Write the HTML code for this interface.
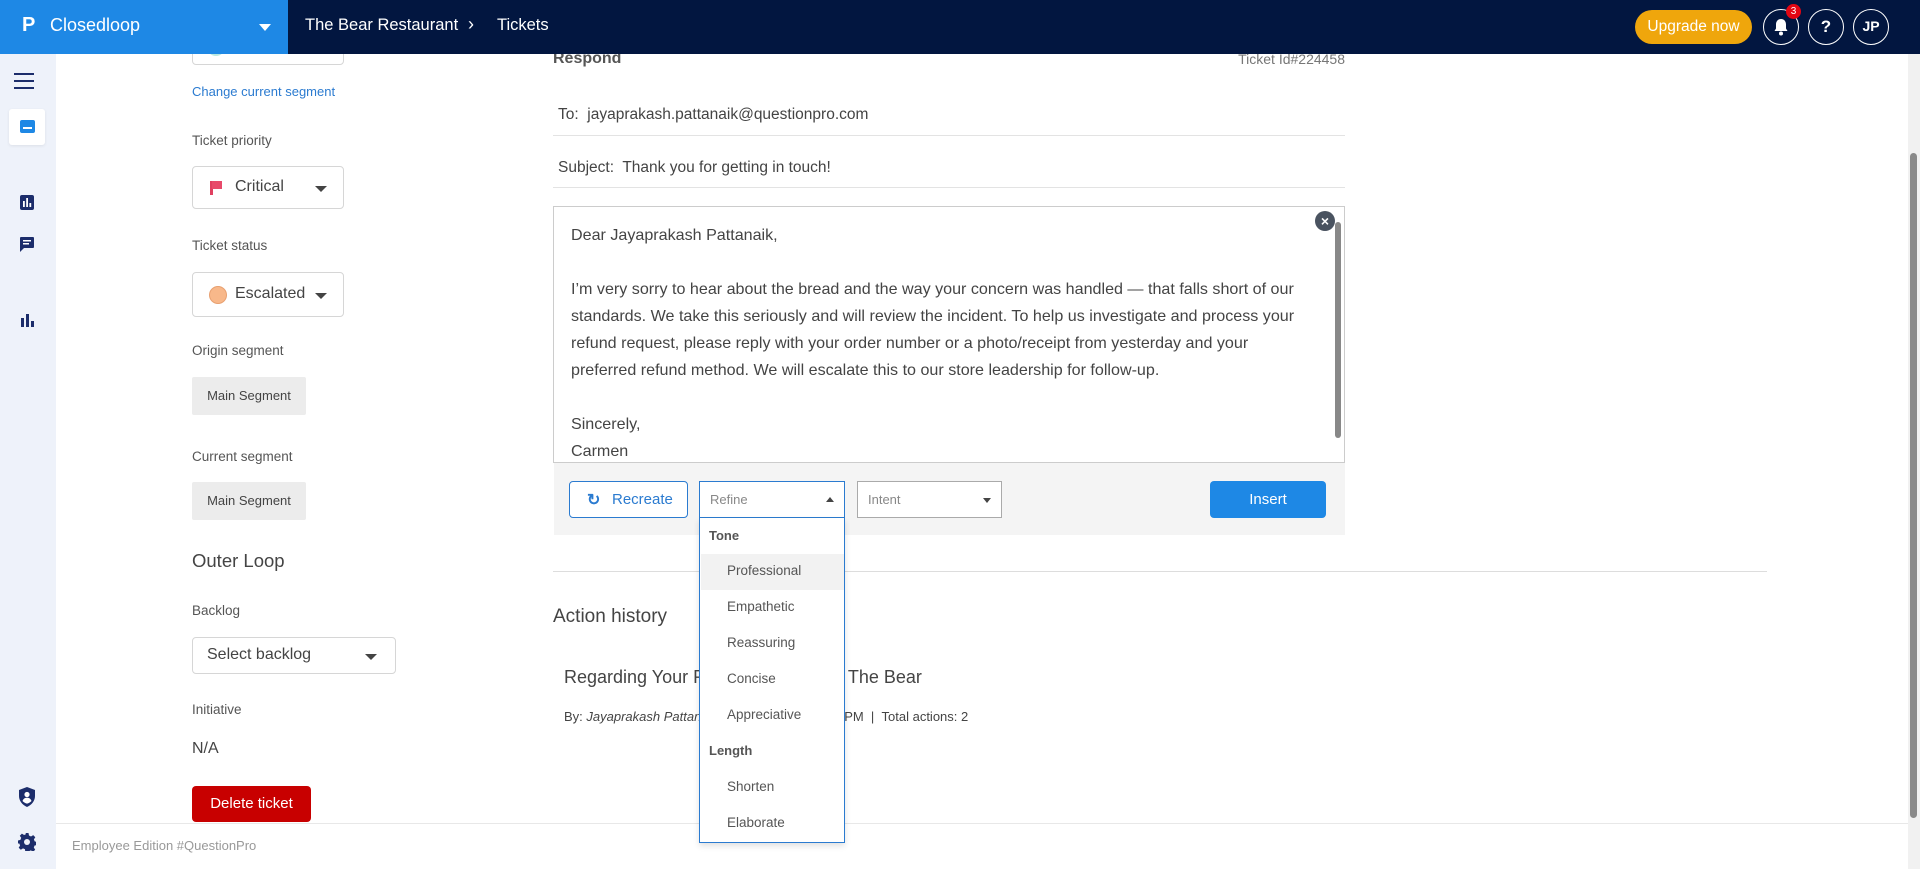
<!DOCTYPE html>
<html><head><meta charset="utf-8"><style>
*{margin:0;padding:0;box-sizing:border-box}
body{width:1920px;height:869px;overflow:hidden;background:#fff;font-family:"Liberation Sans",sans-serif;color:#444;position:relative}
.a{position:absolute;white-space:nowrap}
.lbl{font-size:13.5px;color:#555}
.dd{position:absolute;border:1px solid #d6d6d6;border-radius:4px;background:#fff}
.car{position:absolute;width:0;height:0;border-left:6px solid transparent;border-right:6px solid transparent;border-top:6px solid #444}
.chip{position:absolute;background:#ececec;font-size:13px;color:#444;text-align:center;border-radius:2px}
.mi{position:absolute;left:27px;font-size:13.5px;color:#555}
.hd{z-index:5}
</style></head><body>
<!-- left panel (under header) -->
<div class="dd" style="left:192px;top:30px;width:152px;height:35px"></div>
<div class="a" style="left:207px;top:38px;width:18px;height:18px;border-radius:50%;background:#b8e8e0"></div>
<!-- header -->
<div class="a hd" style="left:0;top:0;width:288px;height:54px;background:#1e88e5"></div>
<div class="a hd" style="left:288px;top:0;width:1632px;height:54px;background:#021640"></div>
<div class="a hd" style="left:22px;top:14px;font-size:20px;font-weight:bold;color:#fff">P</div>
<div class="a hd" style="left:50px;top:15px;font-size:18px;color:#fff">Closedloop</div>
<div class="car hd" style="left:259px;top:24px;border-top-color:#fff;border-top-width:7px"></div>
<div class="a hd" style="left:305px;top:16px;font-size:16.5px;color:#fff">The Bear Restaurant</div>
<div class="a hd" style="left:468px;top:14px;font-size:18px;color:#fff">&#8250;</div>
<div class="a hd" style="left:497px;top:16px;font-size:16.5px;color:#fff">Tickets</div>
<div class="a hd" style="left:1635px;top:10px;width:117px;height:34px;border-radius:17px;background:#efa60c;color:#fff;font-size:15.5px;text-align:center;line-height:34px">Upgrade now</div>
<div class="a hd" style="left:1763px;top:9px;width:36px;height:36px;border:1.5px solid #fff;border-radius:50%"></div>
<svg class="a hd" style="left:1773px;top:18px" width="16" height="18" viewBox="0 0 16 18"><path d="M8 1c-3 0-5 2.3-5 5.5v4L1.5 13h13L13 10.5v-4C13 3.3 11 1 8 1z" fill="#fff"/><circle cx="8" cy="15.5" r="2" fill="#fff"/></svg>
<div class="a hd" style="left:1786px;top:4px;width:15px;height:15px;border-radius:50%;background:#e30613;color:#fff;font-size:10px;text-align:center;line-height:15px">3</div>
<div class="a hd" style="left:1808px;top:9px;width:36px;height:36px;border:1.5px solid #fff;border-radius:50%;color:#fff;font-weight:bold;font-size:17px;text-align:center;line-height:33px">?</div>
<div class="a hd" style="left:1853px;top:9px;width:36px;height:36px;border:1.5px solid #fff;border-radius:50%;color:#fff;font-weight:bold;font-size:14px;text-align:center;line-height:33px">JP</div>
<!-- page scrollbar -->
<div class="a" style="left:1908px;top:54px;width:12px;height:815px;background:#f1f1f1"></div>
<div class="a" style="left:1910px;top:153px;width:7px;height:665px;background:#8a8a8a;border-radius:4px"></div>
<!-- sidebar -->
<div class="a" style="left:0;top:54px;width:56px;height:815px;background:#eef2fa"></div>
<div class="a" style="left:14px;top:73px;width:20px;height:2px;background:#1c2d6b;box-shadow:0 7px 0 #1c2d6b,0 14px 0 #1c2d6b"></div>
<div class="a" style="left:9px;top:109px;width:36px;height:36px;background:#fff;border-radius:3px;box-shadow:0 1px 3px rgba(0,0,0,.08)"></div>
<div class="a" style="left:20px;top:120px;width:15px;height:13px;background:#1e88e5;border-radius:2px"></div>
<div class="a" style="left:23px;top:127px;width:9px;height:2px;background:#fff"></div>
<svg class="a" style="left:20px;top:195px" width="14" height="15" viewBox="0 0 14 15"><rect x="0" y="0" width="14" height="15" rx="2" fill="#1c2d6b"/><rect x="3" y="6" width="1.8" height="6" fill="#fff"/><rect x="6.2" y="3" width="1.8" height="9" fill="#fff"/><rect x="9.4" y="8" width="1.8" height="4" fill="#fff"/></svg>
<svg class="a" style="left:20px;top:237px" width="14" height="15" viewBox="0 0 14 15"><path d="M1 0h12a1 1 0 0 1 1 1v9a1 1 0 0 1-1 1H4l-4 4V1a1 1 0 0 1 1-1z" fill="#1c2d6b"/><rect x="3" y="3" width="8" height="1.5" fill="#fff"/><rect x="3" y="6" width="6" height="1.5" fill="#fff"/></svg>
<svg class="a" style="left:20px;top:313px" width="14" height="14" viewBox="0 0 14 14"><rect x="1" y="5" width="3" height="9" fill="#1c2d6b"/><rect x="6" y="1" width="3" height="13" fill="#1c2d6b"/><rect x="11" y="8" width="3" height="6" fill="#1c2d6b"/></svg>
<svg class="a" style="left:18px;top:787px" width="18" height="20" viewBox="0 0 18 20"><path d="M9 0L17 3v6c0 5-3.5 9-8 11C4.5 18 1 14 1 9V3z" fill="#1c2d6b"/><circle cx="9" cy="7.5" r="2.6" fill="#fff"/><path d="M4.5 14c1-2.5 2.5-3.2 4.5-3.2s3.5.7 4.5 3.2c-1.2 1.3-2.7 2.2-4.5 2.6-1.8-.4-3.3-1.3-4.5-2.6z" fill="#fff"/></svg>
<svg class="a" style="left:18px;top:833px" width="18" height="18" viewBox="0 0 18 18"><path d="M7.5 0h3l.5 2.5 2 1 2.2-1.4 2.1 2.1L15.9 6.4l.8 2 2.3.6v3l-2.4.5-.8 2 1.4 2.2-2.1 2.1-2.2-1.4-2 .8-.5 2.4h-3L7 16.2l-2-.8-2.2 1.4-2.1-2.1 1.4-2.2-.8-2L0 10.5v-3l2.4-.6.8-2L1.8 2.7 3.9.6 6.1 2l1.9-.9z" fill="#1c2d6b"/><circle cx="9" cy="9" r="3" fill="#eef2fa"/></svg>
<!-- footer -->
<div class="a" style="left:56px;top:823px;width:1852px;height:1px;background:#e8e8e8"></div>
<div class="a" style="left:72px;top:838px;font-size:13px;color:#999">Employee Edition #QuestionPro</div>
<!-- left panel -->
<div class="a" style="left:192px;top:84px;font-size:13px;color:#2b7bd0">Change current segment</div>
<div class="a lbl" style="left:192px;top:133px">Ticket priority</div>
<div class="dd" style="left:192px;top:166px;width:152px;height:43px"></div>
<div class="a" style="left:210px;top:181px;width:3px;height:14px;background:#e04060"></div>
<div class="a" style="left:212px;top:181px;width:10px;height:8px;background:#e84a6a"></div>
<div class="a" style="left:235px;top:178px;font-size:16px;color:#444">Critical</div>
<div class="car" style="left:315px;top:186px"></div>
<div class="a lbl" style="left:192px;top:238px">Ticket status</div>
<div class="dd" style="left:192px;top:272px;width:152px;height:45px"></div>
<div class="a" style="left:209px;top:286px;width:18px;height:18px;border-radius:50%;background:#f8b88a;border:1px solid #e8a070"></div>
<div class="a" style="left:235px;top:285px;font-size:16px;color:#444">Escalated</div>
<div class="car" style="left:315px;top:293px"></div>
<div class="a lbl" style="left:192px;top:343px">Origin segment</div>
<div class="chip" style="left:192px;top:377px;width:114px;height:38px;line-height:38px">Main Segment</div>
<div class="a lbl" style="left:192px;top:449px">Current segment</div>
<div class="chip" style="left:192px;top:482px;width:114px;height:38px;line-height:38px">Main Segment</div>
<div class="a" style="left:192px;top:550px;font-size:18.5px;color:#444">Outer Loop</div>
<div class="a lbl" style="left:192px;top:603px">Backlog</div>
<div class="dd" style="left:192px;top:637px;width:204px;height:37px"></div>
<div class="a" style="left:207px;top:646px;font-size:16px;color:#444">Select backlog</div>
<div class="car" style="left:365px;top:654px"></div>
<div class="a lbl" style="left:192px;top:702px">Initiative</div>
<div class="a" style="left:192px;top:740px;font-size:16px;color:#444">N/A</div>
<div class="a" style="left:192px;top:786px;width:119px;height:36px;background:#c80000;border-radius:4px;color:#fff;font-size:15px;text-align:center;line-height:36px">Delete ticket</div>
<!-- main -->
<div class="a" style="left:553px;top:50px;font-size:16px;font-weight:bold;color:#555">Respond</div>
<div class="a" style="left:1200px;top:51px;width:145px;text-align:right;font-size:14px;color:#777">Ticket Id#224458</div>
<div class="a" style="left:558px;top:106px;font-size:15.5px;color:#444">To:&nbsp; jayaprakash.pattanaik@questionpro.com</div>
<div class="a" style="left:553px;top:135px;width:792px;height:1px;background:#e3e3e3"></div>
<div class="a" style="left:558px;top:159px;font-size:15.5px;color:#444">Subject:&nbsp; Thank you for getting in touch!</div>
<div class="a" style="left:553px;top:187px;width:792px;height:1px;background:#e3e3e3"></div>
<div class="a" style="left:553px;top:206px;width:792px;height:257px;border:1px solid #ccc;background:#fff"></div>
<div class="a" style="left:571px;top:222px;font-size:16.1px;line-height:27px;color:#444">Dear Jayaprakash Pattanaik,<br><br>I’m very sorry to hear about the bread and the way your concern was handled — that falls short of our<br>standards. We take this seriously and will review the incident. To help us investigate and process your<br>refund request, please reply with your order number or a photo/receipt from yesterday and your<br>preferred refund method. We will escalate this to our store leadership for follow-up.<br><br>Sincerely,<br>Carmen</div>
<div class="a" style="left:1315px;top:211px;width:20px;height:20px;border-radius:50%;background:#4a5360;color:#fff;font-size:14px;font-weight:bold;text-align:center;line-height:20px">×</div>
<div class="a" style="left:1335px;top:222px;width:6px;height:216px;background:#888;border-radius:3px"></div>
<div class="a" style="left:554px;top:463px;width:791px;height:72px;background:#f4f4f4"></div>
<div class="a" style="left:569px;top:481px;width:119px;height:37px;border:1px solid #2b7bd0;border-radius:4px;background:#fff;color:#2b7bd0;font-size:15px;line-height:35px;padding-left:42px">Recreate</div>
<div class="a" style="left:587px;top:490px;font-size:16px;font-weight:bold;color:#2b7bd0">&#8635;</div>
<div class="a" style="left:699px;top:481px;width:146px;height:37px;border:1px solid #2b7bd0;background:#fff;color:#888;font-size:13px;line-height:35px;padding-left:10px">Refine</div>
<div class="a" style="left:826px;top:497px;border-left:4px solid transparent;border-right:4px solid transparent;border-bottom:5px solid #444"></div>
<div class="a" style="left:857px;top:481px;width:145px;height:37px;border:1px solid #aaa;background:#fff;color:#888;font-size:13px;line-height:35px;padding-left:10px">Intent</div>
<div class="a" style="left:983px;top:498px;border-left:4px solid transparent;border-right:4px solid transparent;border-top:5px solid #444"></div>
<div class="a" style="left:1210px;top:481px;width:116px;height:37px;background:#1e88e5;border-radius:4px;color:#fff;font-size:15px;text-align:center;line-height:37px">Insert</div>
<div class="a" style="left:553px;top:571px;width:1214px;height:1px;background:#ddd"></div>
<div class="a" style="left:553px;top:606px;font-size:19px;color:#444">Action history</div>
<div class="a" style="left:564px;top:667px;font-size:18px;color:#444">Regarding Your Refund Request at The Bear</div>
<div class="a" style="left:564px;top:709px;font-size:13px;color:#444">By: <i>Jayaprakash Pattanaik</i> | 10/17/2025 3:26:33 PM&nbsp; | &nbsp;Total actions: 2</div>
<!-- dropdown -->
<div class="a" style="left:699px;top:518px;width:146px;height:325px;background:#fff;border:1px solid #2b7bd0;border-top:none;box-shadow:0 3px 6px rgba(0,0,0,.12)">
<div class="a" style="left:9px;top:10px;font-size:13px;font-weight:bold;color:#555">Tone</div>
<div class="a" style="left:1px;top:36px;width:143px;height:36px;background:#f2f2f2"></div>
<div class="mi" style="top:45px">Professional</div>
<div class="mi" style="top:81px">Empathetic</div>
<div class="mi" style="top:117px">Reassuring</div>
<div class="mi" style="top:153px">Concise</div>
<div class="mi" style="top:189px">Appreciative</div>
<div class="a" style="left:9px;top:225px;font-size:13px;font-weight:bold;color:#555">Length</div>
<div class="mi" style="top:261px">Shorten</div>
<div class="mi" style="top:297px">Elaborate</div>
</div>
</body></html>
